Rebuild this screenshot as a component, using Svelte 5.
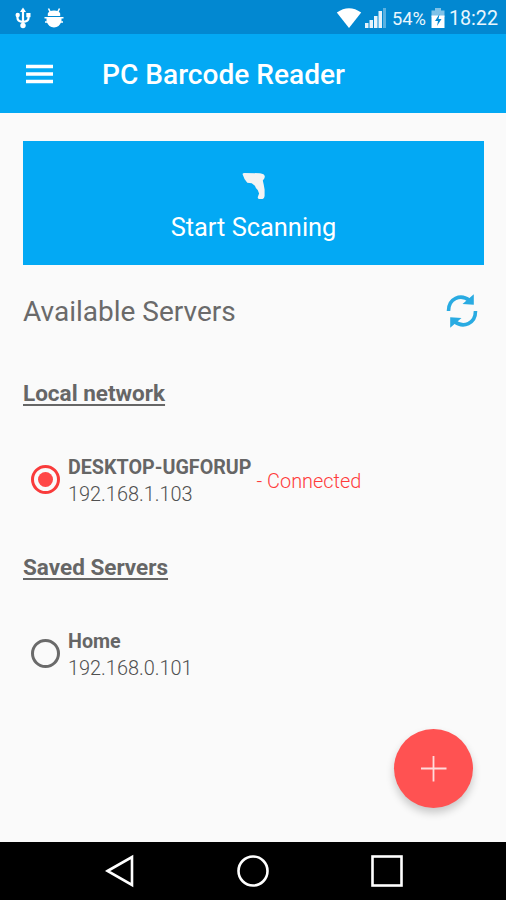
<script lang="ts">
  type Server = { name: string; ip: string; connected: boolean };
  type Group = { title: string; servers: Server[] };

  const groups: Group[] = [
    {
      title: 'Local network',
      servers: [{ name: 'DESKTOP-UGFORUP', ip: '192.168.1.103', connected: true }]
    },
    {
      title: 'Saved Servers',
      servers: [{ name: 'Home', ip: '192.168.0.101', connected: false }]
    }
  ];
</script>

<div class="screen">
  <div class="status-bar">
    <svg class="usb" width="16" height="22" viewBox="0 0 16 22">
      <path d="M8 3v15M2.500 8v3q0 3.500 5.500 4M13.500 8v3q0 3.500-5.500 4" fill="none" stroke="#fff" stroke-width="2.200" />
      <path d="M8 .5l3 4.500H5z" fill="#fff" />
      <circle cx="8" cy="18.500" r="2.700" fill="#fff" />
      <circle cx="2.700" cy="8" r="2.200" fill="#fff" />
      <rect x="11.300" y="6" width="4.200" height="4.200" fill="#fff" />
    </svg>
    <svg class="debug" width="20" height="20" viewBox="0 0 20 20">
      <path d="M4.500 .5l2 4M15.500 .5l-2 4" stroke="#fff" stroke-width="1.600" />
      <path d="M3.800 8V5.500Q5 2.500 10 2.500t6.200 3V8zM2.500 9h15v4q-2 6.500-7.500 6.500T2.500 13z" fill="#fff" />
      <path d="M.5 9.800h19M1 14h18" stroke="#fff" stroke-width="1.600" />
    </svg>
    <span class="spacer"></span>
    <svg class="wifi" width="26" height="20" viewBox="0 0 26 20">
      <path d="M.8 4.500Q13-4 25.200 4.500L13 20z" fill="#fff" />
    </svg>
    <svg class="signal" width="22" height="20" viewBox="0 0 22 20">
      <path d="M0 15h3.500v5H0zM4.500 12H8v8H4.500zM9 8h3.500v12H9zM13.500 3H17v17h-3.500z" fill="#fff" opacity=".9" />
      <path d="M18 0h3v20h-3z" fill="#fff" opacity=".35" />
    </svg>
    <span class="percent">54%</span>
    <svg class="battery" width="14" height="20" viewBox="0 0 14 20">
      <path d="M4 0h6v2.500h3.500V9H.5V2.500H4z" fill="#7fc2e8" />
      <path d="M.5 7.500h13V20H.5z" fill="#fff" />
      <path d="M8.500 6L4 13h3l-1 5 4.500-7h-3z" fill="#0288d1" />
    </svg>
    <span class="clock">18:22</span>
  </div>

  <header class="app-bar">
    <button class="menu" aria-label="Menu">
      <svg width="27" height="20" viewBox="0 0 27 20">
        <path d="M0 2.500h27M0 10h27M0 17.500h27" stroke="#fff" stroke-width="3.300" />
      </svg>
    </button>
    <h1>PC Barcode Reader</h1>
  </header>

  <main>
    <button class="scan">
      <svg width="24" height="28" viewBox="0 0 24 28">
        <path
          d="M.5 2Q.8 1 2.500 1L18 1.200q4.500.5 4.800 3.300.2 1.500-2 4l.9 4 .9 5V24q-.3 2.700-2 2.900h-3.600q-1.500-.4-1.200-2l1.300-3.400-1.400-3.500-1.800-2-1-2.300-3.200-2.500-4.400-.5L2.500 7z"
          fill="#f3f3f3"
        />
      </svg>
      <span>Start Scanning</span>
    </button>

    <div class="servers-header">
      <h2>Available Servers</h2>
      <button class="refresh" aria-label="Refresh">
        <svg width="32" height="34" viewBox="0 0 32 34">
          <g fill="none" stroke="#29abe2" stroke-width="3.600">
            <path d="M2.500 17C2.500 4.500 14.500-.5 23.500 6.500" />
            <path d="M29.500 17C29.500 29.500 17.500 34.500 8.500 27.500" />
          </g>
          <path d="M27.800 .3v10.500L16.500 10zM4.200 33.700V23.200l11.300.8z" fill="#29abe2" />
        </svg>
      </button>
    </div>

    {#each groups as group}
      <section>
        <h3>{group.title}</h3>
        {#each group.servers as server}
          <div class="server">
            <span class="radio" class:checked={server.connected}></span>
            <div class="info">
              <span class="name">{server.name}</span>
              <span class="ip">{server.ip}</span>
            </div>
            {#if server.connected}
              <span class="state">- Connected</span>
            {/if}
          </div>
        {/each}
      </section>
    {/each}

    <button class="fab" aria-label="Add server">
      <svg width="26" height="26" viewBox="0 0 26 26">
        <path d="M12.500 0v25.500M0 12.500h25.500" stroke="#ffdcdc" stroke-width="1.800" />
      </svg>
    </button>
  </main>

  <nav>
    <svg width="30" height="34" viewBox="0 0 30 34">
      <path d="M2.500 17L27 3v28z" />
    </svg>
    <svg width="34" height="34" viewBox="0 0 34 34">
      <circle cx="17" cy="17" r="14.500" />
    </svg>
    <svg width="34" height="34" viewBox="0 0 34 34">
      <rect x="2.500" y="2.500" width="29" height="29" />
    </svg>
  </nav>
</div>

<style>
  :global(body) {
    margin: 0;
    background: #fafafa;
  }

  .screen {
    display: flex;
    flex-direction: column;
    width: 506px;
    height: 900px;
    overflow: hidden;
    background: #fafafa;
    color: #666;
    font-family: Roboto, 'Liberation Sans', sans-serif;
  }

  button {
    padding: 0;
    border: none;
    background: none;
    color: inherit;
    font: inherit;
    cursor: pointer;
  }

  svg {
    display: block;
    flex: none;
  }

  h1,
  h2,
  h3 {
    margin: 0;
  }

  .status-bar {
    display: flex;
    align-items: center;
    box-sizing: border-box;
    height: 34px;
    padding: 2px 8px 0 15px;
    background: #0288d1;
    color: #e9f6fd;
    font-size: 19.7px;
  }

  .debug {
    margin-left: 13px;
  }

  .spacer {
    flex: 1;
  }

  .wifi {
    margin-right: 3px;
  }

  .percent {
    margin-left: 5px;
    font-size: 18.3px;
  }

  .battery {
    margin: 0 4px 0 5px;
  }

  .app-bar {
    display: flex;
    align-items: center;
    box-sizing: border-box;
    height: 79px;
    padding-left: 26px;
    background: #03a9f4;
    color: #fff;
  }

  h1 {
    margin-left: 49px;
    padding-top: 2px;
    font-size: 28.1px;
    font-weight: 500;
  }

  main {
    position: relative;
    flex: 1;
    padding: 28px 22px 0 23px;
  }

  .scan {
    display: flex;
    flex-direction: column;
    align-items: center;
    box-sizing: border-box;
    width: 100%;
    height: 124px;
    padding-top: 31px;
    background: #03a9f4;
    color: #fff;
    font-size: 25.4px;
  }

  .scan span {
    margin-top: 12px;
  }

  .servers-header {
    display: flex;
    align-items: center;
    justify-content: space-between;
    height: 91px;
    padding-right: 6px;
  }

  h2 {
    padding-top: 2px;
    color: #6a6a6a;
    font-size: 28px;
    font-weight: 400;
  }

  h3 {
    height: 76px;
    font-size: 22.5px;
    font-weight: 700;
    line-height: 75px;
    text-decoration: underline;
    text-decoration-thickness: 1.5px;
    text-underline-offset: 3px;
  }

  .server {
    display: flex;
    align-items: center;
    height: 98px;
    padding-left: 8px;
  }

  .radio {
    display: flex;
    align-items: center;
    justify-content: center;
    box-sizing: border-box;
    width: 29px;
    height: 29px;
    margin-bottom: 3px;
    border: 3px solid #6a6a6a;
    border-radius: 50%;
  }

  .radio.checked {
    border-color: #f93b3b;
  }

  .radio.checked::after {
    width: 15px;
    height: 15px;
    border-radius: 50%;
    background: #ff4747;
    content: '';
  }

  .info {
    display: flex;
    flex-direction: column;
    margin-left: 8px;
    font-size: 19.7px;
    line-height: 27px;
  }

  .name {
    font-weight: 700;
  }

  .ip {
    color: #505050;
    font-size: 19.9px;
    font-weight: 300;
  }

  .state {
    margin-left: 5px;
    color: #ff3b3b;
    font-size: 19.9px;
    font-weight: 300;
  }

  .fab {
    position: absolute;
    right: 33px;
    bottom: 34px;
    display: flex;
    align-items: center;
    justify-content: center;
    width: 79px;
    height: 79px;
    border-radius: 50%;
    background: #ff5252;
    box-shadow: 0 5px 9px rgba(0, 0, 0, 0.2);
  }

  nav {
    display: flex;
    align-items: center;
    justify-content: space-between;
    box-sizing: border-box;
    height: 58px;
    padding: 0 102px 0 105px;
    background: #000;
  }

  nav svg {
    fill: none;
    stroke: #fff;
    stroke-width: 2.6;
  }
</style>
